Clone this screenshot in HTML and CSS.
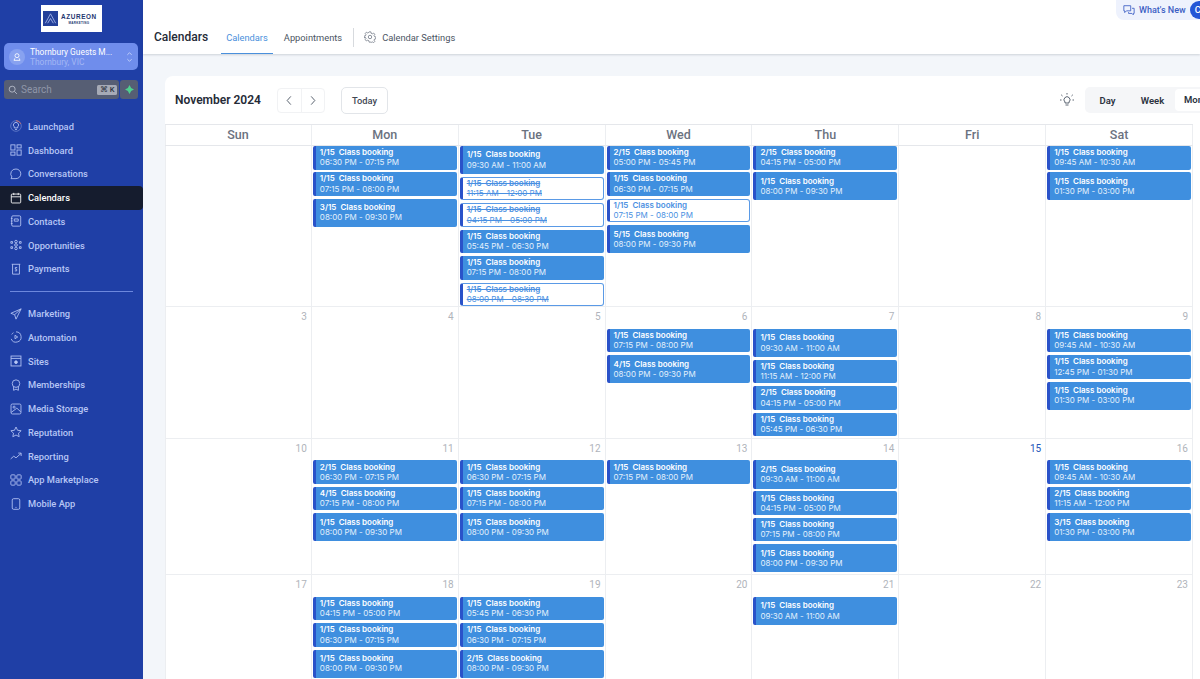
FILE: index.html
```html
<!DOCTYPE html>
<html lang="en">
<head>
<meta charset="utf-8">
<title>Calendars</title>
<link rel="stylesheet" href="styles.css">
</head>
<body>
<svg class="sprite" width="0" height="0" aria-hidden="true">
  <defs>
    <symbol id="i-launch" viewBox="0 0 14 14"><circle cx="7" cy="7" r="6.200" stroke-opacity=".45"/><path d="M7 .8a6.200 6.200 0 0 1 5.600 3.600" stroke="#e0705f"/><path d="M5 9.200V8a3 3 0 1 1 4 0v1.200zM5.800 11h2.400"/></symbol>
    <symbol id="i-dash" viewBox="0 0 14 14"><rect x="1" y="1" width="4.800" height="6"/><rect x="8.200" y="1" width="4.800" height="3.600"/><rect x="1" y="9.400" width="4.800" height="3.600"/><rect x="8.200" y="7" width="4.800" height="6"/></symbol>
    <symbol id="i-conv" viewBox="0 0 14 14"><path d="M7 1.200a5.600 5.600 0 0 1 0 11.200H1.200l1-2A5.600 5.600 0 0 1 7 1.200z"/></symbol>
    <symbol id="i-cal" viewBox="0 0 14 14"><rect x="1.500" y="2.400" width="11" height="10.400" rx="1"/><path d="M1.500 5.600h11M4.400 1v2.600M9.600 1v2.600"/></symbol>
    <symbol id="i-contacts" viewBox="0 0 14 14"><rect x="2" y="1" width="10.500" height="12" rx="1.400"/><path d="M5 4.600h4.600v2.600H5zM1 4h2M1 7h2M1 10h2"/></symbol>
    <symbol id="i-opp" viewBox="0 0 14 14"><circle cx="7" cy="3" r="1.500"/><circle cx="7" cy="11" r="1.500"/><path d="M5.400 7a1.600 1.600 0 1 0 3.200 0 1.600 1.600 0 1 0-3.200 0M1 3h2v2H1zM1 9h2v2H1zM11 3h2v2h-2zM11 9h2v2h-2z"/></symbol>
    <symbol id="i-pay" viewBox="0 0 14 14"><path d="M2 1.500h10M3 1.500V13h8V1.500"/><path d="M8.400 5.200H6.200v2h1.600v2H5.600"/></symbol>
    <symbol id="i-mkt" viewBox="0 0 14 14"><path d="M13 1 1 6.200l4.400 1.600L7 13z"/><path d="M13 1 5.400 7.800"/></symbol>
    <symbol id="i-auto" viewBox="0 0 14 14"><path d="M7 1a6 6 0 1 1-5.600 8.200"/><path d="M2 4a6 6 0 0 1 2-2"/><path d="M5.800 5v4l3.200-2z"/></symbol>
    <symbol id="i-sites" viewBox="0 0 14 14"><rect x="1.200" y="1.200" width="11.600" height="11.600"/><path d="M1.200 4h11.600"/><circle cx="7" cy="8.400" r="1.600" fill="currentColor"/></symbol>
    <symbol id="i-mem" viewBox="0 0 14 14"><circle cx="7" cy="5.400" r="4.400"/><path d="M4.200 9v4.200L7 11.800l2.800 1.400V9"/></symbol>
    <symbol id="i-media" viewBox="0 0 14 14"><rect x="1.200" y="1.200" width="11.600" height="11.600" rx="1.600"/><circle cx="4.800" cy="4.800" r="1.200"/><path d="M1.400 11 8 6l4.600 4.400"/></symbol>
    <symbol id="i-rep" viewBox="0 0 14 14"><path d="m7 1.200 1.800 3.800 4.200.5-3.100 2.900.8 4.100L7 10.500l-3.700 2 .8-4.100L1 5.500l4.200-.5z"/></symbol>
    <symbol id="i-report" viewBox="0 0 14 14"><path d="m.8 10.400 3.600-3.200 2.600 2L12.800 4M9.600 3.600h3.400V7"/></symbol>
    <symbol id="i-app" viewBox="0 0 14 14"><rect x="1" y="1" width="5" height="5" rx="1"/><rect x="8" y="1" width="5" height="5" rx="1"/><rect x="1" y="8" width="5" height="5" rx="1"/><rect x="8" y="8" width="5" height="5" rx="1"/></symbol>
    <symbol id="i-mobile" viewBox="0 0 14 14"><rect x="2.600" y=".8" width="8.800" height="12.400" rx="1.600"/><path d="M6.400 11h1.200"/></symbol>
  </defs>
</svg>

<aside class="sidebar">
  <div class="logo">
    <svg class="logo-mark" viewBox="0 0 16 16"><rect width="16" height="16" fill="#24409a"/><path d="M2.500 13 8 3l5.500 10M5 13l3-5 3 5" fill="none" stroke="#b9c8f5" stroke-width=".8"/></svg>
    <div class="logo-text"><span class="logo-name">AZUREON</span><span class="logo-sub">MARKETING</span></div>
  </div>
  <div class="location">
    <span class="loc-badge"><svg viewBox="0 0 12 12"><circle cx="6" cy="4.400" r="2.400"/><path d="M3.400 7.600 2.400 10h7.200l-1-2.400"/></svg></span>
    <div class="loc-text"><span class="loc-name">Thornbury Guests M...</span><span class="loc-sub">Thornbury, VIC</span></div>
    <svg class="loc-chev" viewBox="0 0 8 14"><path d="M1.500 4.500 4 2l2.500 2.500M1.500 9.500 4 12l2.500-2.500"/></svg>
  </div>
  <div class="search-row">
    <div class="search">
      <svg viewBox="0 0 12 12"><circle cx="5" cy="5" r="3.600"/><path d="m7.700 7.700 3 3"/></svg>
      <span class="search-label">Search</span>
      <span class="kbd">⌘ K</span>
    </div>
    <button class="spark"><svg viewBox="0 0 10 10"><path d="M5 0 6.800 3.200 10 5 6.800 6.800 5 10 3.200 6.800 0 5 3.200 3.200z"/></svg></button>
  </div>
  <nav class="nav">
    <a class="nav-item"><svg><use href="#i-launch"/></svg>Launchpad</a>
    <a class="nav-item"><svg><use href="#i-dash"/></svg>Dashboard</a>
    <a class="nav-item"><svg><use href="#i-conv"/></svg>Conversations</a>
    <a class="nav-item active"><svg><use href="#i-cal"/></svg>Calendars</a>
    <a class="nav-item"><svg><use href="#i-contacts"/></svg>Contacts</a>
    <a class="nav-item"><svg><use href="#i-opp"/></svg>Opportunities</a>
    <a class="nav-item"><svg><use href="#i-pay"/></svg>Payments</a>
  </nav>
  <hr class="nav-rule">
  <nav class="nav">
    <a class="nav-item"><svg><use href="#i-mkt"/></svg>Marketing</a>
    <a class="nav-item"><svg><use href="#i-auto"/></svg>Automation</a>
    <a class="nav-item"><svg><use href="#i-sites"/></svg>Sites</a>
    <a class="nav-item"><svg><use href="#i-mem"/></svg>Memberships</a>
    <a class="nav-item"><svg><use href="#i-media"/></svg>Media Storage</a>
    <a class="nav-item"><svg><use href="#i-rep"/></svg>Reputation</a>
    <a class="nav-item"><svg><use href="#i-report"/></svg>Reporting</a>
    <a class="nav-item"><svg><use href="#i-app"/></svg>App Marketplace</a>
    <a class="nav-item"><svg><use href="#i-mobile"/></svg>Mobile App</a>
  </nav>
</aside>

<main class="main">
  <header class="topbar">
    <h1 class="page-title">Calendars</h1>
    <a class="tab current">Calendars</a>
    <a class="tab">Appointments</a>
    <span class="tab-sep"></span>
    <a class="tab settings">
      <svg viewBox="0 0 14 14"><circle cx="7" cy="7" r="2"/><path d="M6 1h2l.4 1.700 1.300.6 1.500-.9 1.400 1.400-.9 1.500.6 1.300 1.700.4v2l-1.700.4-.6 1.300.9 1.500-1.400 1.400-1.500-.9-1.300.6L8 13H6l-.4-1.700-1.300-.6-1.500.9-1.400-1.400.9-1.500-.6-1.300L0 8V6l1.700-.4.600-1.300-.9-1.500 1.400-1.400 1.500.9 1.300-.6z"/></svg>
      Calendar Settings
    </a>
    <div class="whats-new">
      <svg viewBox="0 0 14 14"><path d="M1 2h8v6H4l-2 2V8H1zM10.500 5H13v6h-1v1.600L10.400 11H6.500V9.500"/></svg>
      What's New
      <span class="wn-dot">C</span>
    </div>
  </header>

  <section class="card">
    <div class="toolbar">
      <h2 class="month">November 2024</h2>
      <div class="pager">
        <button class="pager-btn"><svg viewBox="0 0 8 12"><path d="M6 1.500 2 6l4 4.500"/></svg></button>
        <button class="pager-btn"><svg viewBox="0 0 8 12"><path d="M2 1.500 6 6l-4 4.500"/></svg></button>
      </div>
      <button class="today">Today</button>
      <svg class="bulb" viewBox="0 0 14 14"><path d="M5 10V9a3 3 0 1 1 4 0v1zM5.500 12h3M7 1.500V0M2.500 3 1.200 1.800M11.500 3l1.300-1.200M1.500 7H0M14 7h-1.500"/></svg>
      <div class="views">
        <span class="view">Day</span>
        <span class="view">Week</span>
        <span class="view on">Month</span>
      </div>
    </div>

    <div class="week head">
      <div class="dow">Sun</div><div class="dow">Mon</div><div class="dow">Tue</div><div class="dow">Wed</div><div class="dow">Thu</div><div class="dow">Fri</div><div class="dow">Sat</div>
    </div>

    <div class="week w1">
      <div class="day"></div>
      <div class="day">
        <div class="ev"><b>1/15&nbsp; Class booking</b><span>06:30 PM - 07:15 PM</span></div>
        <div class="ev"><b>1/15&nbsp; Class booking</b><span>07:15 PM - 08:00 PM</span></div>
        <div class="ev tall"><b>3/15&nbsp; Class booking</b><span>08:00 PM - 09:30 PM</span></div>
      </div>
      <div class="day">
        <div class="ev tall"><b>1/15&nbsp; Class booking</b><span>09:30 AM - 11:00 AM</span></div>
        <div class="ev off"><b>1/15&nbsp; Class booking</b><span>11:15 AM - 12:00 PM</span></div>
        <div class="ev off"><b>1/15&nbsp; Class booking</b><span>04:15 PM - 05:00 PM</span></div>
        <div class="ev"><b>1/15&nbsp; Class booking</b><span>05:45 PM - 06:30 PM</span></div>
        <div class="ev"><b>1/15&nbsp; Class booking</b><span>07:15 PM - 08:00 PM</span></div>
        <div class="ev off"><b>1/15&nbsp; Class booking</b><span>08:00 PM - 08:30 PM</span></div>
      </div>
      <div class="day">
        <div class="ev"><b>2/15&nbsp; Class booking</b><span>05:00 PM - 05:45 PM</span></div>
        <div class="ev"><b>1/15&nbsp; Class booking</b><span>06:30 PM - 07:15 PM</span></div>
        <div class="ev open"><b>1/15&nbsp; Class booking</b><span>07:15 PM - 08:00 PM</span></div>
        <div class="ev tall"><b>5/15&nbsp; Class booking</b><span>08:00 PM - 09:30 PM</span></div>
      </div>
      <div class="day">
        <div class="ev"><b>2/15&nbsp; Class booking</b><span>04:15 PM - 05:00 PM</span></div>
        <div class="ev tall"><b>1/15&nbsp; Class booking</b><span>08:00 PM - 09:30 PM</span></div>
      </div>
      <div class="day"></div>
      <div class="day">
        <div class="ev"><b>1/15&nbsp; Class booking</b><span>09:45 AM - 10:30 AM</span></div>
        <div class="ev tall"><b>1/15&nbsp; Class booking</b><span>01:30 PM - 03:00 PM</span></div>
      </div>
    </div>

    <div class="week w2">
      <div class="day"><div class="date">3</div></div>
      <div class="day"><div class="date">4</div></div>
      <div class="day"><div class="date">5</div></div>
      <div class="day"><div class="date">6</div>
        <div class="ev"><b>1/15&nbsp; Class booking</b><span>07:15 PM - 08:00 PM</span></div>
        <div class="ev tall"><b>4/15&nbsp; Class booking</b><span>08:00 PM - 09:30 PM</span></div>
      </div>
      <div class="day"><div class="date">7</div>
        <div class="ev tall"><b>1/15&nbsp; Class booking</b><span>09:30 AM - 11:00 AM</span></div>
        <div class="ev"><b>1/15&nbsp; Class booking</b><span>11:15 AM - 12:00 PM</span></div>
        <div class="ev"><b>2/15&nbsp; Class booking</b><span>04:15 PM - 05:00 PM</span></div>
        <div class="ev"><b>1/15&nbsp; Class booking</b><span>05:45 PM - 06:30 PM</span></div>
      </div>
      <div class="day"><div class="date">8</div></div>
      <div class="day"><div class="date">9</div>
        <div class="ev"><b>1/15&nbsp; Class booking</b><span>09:45 AM - 10:30 AM</span></div>
        <div class="ev"><b>1/15&nbsp; Class booking</b><span>12:45 PM - 01:30 PM</span></div>
        <div class="ev tall"><b>1/15&nbsp; Class booking</b><span>01:30 PM - 03:00 PM</span></div>
      </div>
    </div>

    <div class="week w3">
      <div class="day"><div class="date">10</div></div>
      <div class="day"><div class="date">11</div>
        <div class="ev"><b>2/15&nbsp; Class booking</b><span>06:30 PM - 07:15 PM</span></div>
        <div class="ev"><b>4/15&nbsp; Class booking</b><span>07:15 PM - 08:00 PM</span></div>
        <div class="ev tall"><b>1/15&nbsp; Class booking</b><span>08:00 PM - 09:30 PM</span></div>
      </div>
      <div class="day"><div class="date">12</div>
        <div class="ev"><b>1/15&nbsp; Class booking</b><span>06:30 PM - 07:15 PM</span></div>
        <div class="ev"><b>1/15&nbsp; Class booking</b><span>07:15 PM - 08:00 PM</span></div>
        <div class="ev tall"><b>1/15&nbsp; Class booking</b><span>08:00 PM - 09:30 PM</span></div>
      </div>
      <div class="day"><div class="date">13</div>
        <div class="ev"><b>1/15&nbsp; Class booking</b><span>07:15 PM - 08:00 PM</span></div>
      </div>
      <div class="day"><div class="date">14</div>
        <div class="ev tall"><b>2/15&nbsp; Class booking</b><span>09:30 AM - 11:00 AM</span></div>
        <div class="ev"><b>1/15&nbsp; Class booking</b><span>04:15 PM - 05:00 PM</span></div>
        <div class="ev"><b>1/15&nbsp; Class booking</b><span>07:15 PM - 08:00 PM</span></div>
        <div class="ev tall"><b>1/15&nbsp; Class booking</b><span>08:00 PM - 09:30 PM</span></div>
      </div>
      <div class="day"><div class="date today-date">15</div></div>
      <div class="day"><div class="date">16</div>
        <div class="ev"><b>1/15&nbsp; Class booking</b><span>09:45 AM - 10:30 AM</span></div>
        <div class="ev"><b>2/15&nbsp; Class booking</b><span>11:15 AM - 12:00 PM</span></div>
        <div class="ev tall"><b>3/15&nbsp; Class booking</b><span>01:30 PM - 03:00 PM</span></div>
      </div>
    </div>

    <div class="week w4">
      <div class="day"><div class="date">17</div></div>
      <div class="day"><div class="date">18</div>
        <div class="ev"><b>1/15&nbsp; Class booking</b><span>04:15 PM - 05:00 PM</span></div>
        <div class="ev"><b>1/15&nbsp; Class booking</b><span>06:30 PM - 07:15 PM</span></div>
        <div class="ev tall"><b>1/15&nbsp; Class booking</b><span>08:00 PM - 09:30 PM</span></div>
      </div>
      <div class="day"><div class="date">19</div>
        <div class="ev"><b>1/15&nbsp; Class booking</b><span>05:45 PM - 06:30 PM</span></div>
        <div class="ev"><b>1/15&nbsp; Class booking</b><span>06:30 PM - 07:15 PM</span></div>
        <div class="ev tall"><b>2/15&nbsp; Class booking</b><span>08:00 PM - 09:30 PM</span></div>
      </div>
      <div class="day"><div class="date">20</div></div>
      <div class="day"><div class="date">21</div>
        <div class="ev tall"><b>1/15&nbsp; Class booking</b><span>09:30 AM - 11:00 AM</span></div>
      </div>
      <div class="day"><div class="date">22</div></div>
      <div class="day"><div class="date">23</div></div>
    </div>
  </section>
</main>
</body>
</html>
```

FILE: styles.css
```css
* { box-sizing: border-box; }
html, body { height: 100%; }
body {
  margin: 0;
  display: flex;
  width: 1200px;
  height: 679px;
  overflow: hidden;
  font-family: Roboto, "Liberation Sans", sans-serif;
  background: #f3f6fa;
  color: #1f2937;
}
.sprite { position: absolute; }

/* Sidebar */
.sidebar {
  flex: 0 0 143px;
  background: #1f3fa6;
  display: flex;
  flex-direction: column;
  padding-top: 5px;
}
.logo {
  width: 61px;
  height: 27px;
  margin-left: 41px;
  background: #fff;
  display: flex;
  align-items: center;
  gap: 3px;
  padding: 0 2px;
}
.logo-mark { width: 15px; height: 15px; flex: none; }
.logo-text { display: flex; flex-direction: column; align-items: center; color: #24366f; }
.logo-name { font: 700 6.400px/8px "Liberation Sans", sans-serif; letter-spacing: .6px; }
.logo-sub { font: 700 3px/4px "Liberation Sans", sans-serif; letter-spacing: .3px; }

.location {
  margin: 11px 5px 0 4px;
  height: 27px;
  border-radius: 5px;
  background: #6f8dec;
  display: flex;
  align-items: center;
  padding: 0 5px;
  color: #fff;
}
.loc-badge {
  width: 16px; height: 16px; border-radius: 50%;
  background: #88a2f0;
  display: flex; align-items: center; justify-content: center;
  flex: none;
}
.loc-badge svg { width: 10px; height: 10px; fill: none; stroke: #fff; stroke-width: 1; }
.loc-text { display: flex; flex-direction: column; margin-left: 5px; flex: 1; min-width: 0; }
.loc-name { font-size: 8.400px; line-height: 10px; font-weight: 400; white-space: nowrap; }
.loc-sub { font-size: 8.400px; line-height: 10px; color: #a3b7f4; }
.loc-chev { width: 7px; height: 12px; fill: none; stroke: #c9d6fa; stroke-width: 1; flex: none; }

.search-row { display: flex; margin: 10px 5px 0 4px; gap: 1px; height: 19px; }
.search {
  flex: 1;
  background: #565e74;
  border-radius: 3px;
  display: flex; align-items: center;
  padding: 0 2px 0 4px;
  color: #8f96a8;
  font-size: 10px;
}
.search svg { width: 10px; height: 10px; fill: none; stroke: #b5bac8; stroke-width: 1.100; flex: none; }
.search-label { margin-left: 3px; flex: 1; }
.kbd { background: #a6aab6; color: #2f3542; border-radius: 1.500px; font-size: 7.500px; line-height: 10px; padding: 0 2.500px; font-weight: 500; }
.spark { flex: 0 0 18px; border: 0; padding: 0; background: #565e74; border-radius: 3px; display: flex; align-items: center; justify-content: center; }
.spark svg { width: 9px; height: 9px; fill: #4fd08f; }

.nav { display: flex; flex-direction: column; }
.sidebar .nav:first-of-type { margin-top: 15.500px; }
.nav-item {
  height: 23.750px;
  display: flex;
  align-items: center;
  padding-left: 10px;
  gap: 6px;
  font-size: 9.300px;
  font-weight: 500;
  color: #b7c6f5;
}
.nav-item svg { width: 12px; height: 12px; flex: none; fill: none; stroke: currentColor; stroke-width: 1; }
.nav-item.active { background: #151c2e; color: #fff; border-radius: 0 4px 4px 0; }
.nav-rule { border: 0; border-top: 1px solid #6d88dd; margin: 10px 10px 10px 10px; width: 123px; }

/* Main */
.main { flex: 1; min-width: 0; display: flex; flex-direction: column; position: relative; }
.topbar {
  height: 54px;
  background: #fff;
  box-shadow: 0 1px 2px rgba(40, 50, 70, .18);
  display: flex;
  align-items: center;
  padding: 20px 0 0 11px;
  flex: none;
}
.page-title { margin: 0 13px 0 0; font-size: 12px; font-weight: 500; color: #252b37; }
.tab { font-size: 9.300px; color: #4b5563; padding: 0 5px; height: 34px; display: flex; align-items: center; margin-right: 6px; }
.tab.current { color: #4a90dc; border-bottom: 1px solid #4a90dc; padding-top: 1px; }
.tab-sep { width: 1px; height: 19px; background: #d7dade; margin: 0 5px 0 0; }
.tab.settings { gap: 6px; }
.tab.settings svg { width: 12px; height: 12px; fill: none; stroke: #5b6472; stroke-width: .8; }
.whats-new {
  position: absolute;
  top: 0;
  left: 973px;
  width: 100px;
  height: 20px;
  border-radius: 0 0 0 8px;
  background: #eef2fd;
  display: flex;
  align-items: center;
  padding-left: 7px;
  gap: 4px;
  font-size: 9px;
  font-weight: 500;
  color: #3d5fc4;
  white-space: nowrap;
}
.whats-new svg { width: 12px; height: 12px; fill: none; stroke: #3d5fc4; stroke-width: 1; flex: none; }
.wn-dot { flex: none; width: 18px; height: 18px; border-radius: 50%; background: #2456d6; color: #fff; display: flex; align-items: center; padding-left: 5px; }

/* Calendar card */
.card {
  margin: 22px 0 0 22px;
  width: 1060px;
  background: #fff;
  border-radius: 8px 0 0 0;
  flex: none;
}
.toolbar { height: 48px; display: flex; align-items: center; padding-left: 10px; width: 1028px; }
.month { margin: 0; font-size: 12px; font-weight: 600; color: #252b37; width: 102px; flex: none; }
.pager { display: flex; height: 25px; width: 48px; border: 1px solid #f1f2f4; border-radius: 4px; flex: none; }
.pager-btn { flex: 1; border: 0; background: none; padding: 0; display: flex; align-items: center; justify-content: center; }
.pager-btn + .pager-btn { border-left: 1px solid #f1f2f4; }
.pager-btn svg { width: 8px; height: 11px; fill: none; stroke: #4b5563; stroke-width: 1; }
.today {
  margin-left: 16px;
  width: 47px; height: 27px;
  background: #fff;
  border: 1px solid #e2e5e9;
  border-radius: 5px;
  font: 500 9.300px Roboto, sans-serif;
  color: #3f4754;
  flex: none;
}
.bulb { width: 14px; height: 14px; margin-left: auto; margin-right: 11px; fill: none; stroke: #4b5563; stroke-width: .9; flex: none; }
.views {
  display: flex; align-items: center;
  height: 26px;
  background: #f5f6f8;
  border-radius: 5px;
  margin-right: -32px;
  width: 140px;
  flex: none;
  font-size: 9.500px;
  font-weight: 600;
  color: #2b3240;
  overflow: hidden;
}
.view { width: 45px; text-align: center; flex: none; }
.view.on { background: #fff; height: 22px; line-height: 22px; border-radius: 4px; padding-left: 9px; text-align: left; width: 50px; }

.week { display: grid; grid-template-columns: repeat(7, minmax(0, 1fr)); width: 1028px; box-shadow: inset 1px 0 #eceef1; }
.head { height: 22px; border-top: 1px solid #e5e7eb; }
.dow {
  font-size: 12.500px; font-weight: 500; color: #6b7280;
  text-align: center; line-height: 20px;
  border-right: 1px solid #eceef1;
  border-bottom: 1px solid #e5e7eb;
}
.w1 { height: 161px; }
.w2 { height: 131.500px; }
.w3 { height: 136.500px; }
.w4 { height: 120px; }
.day {
  border-right: 1px solid #eceef1;
  border-bottom: 1px solid #eceef1;
  padding: 0 1px;
  min-width: 0;
  display: flex;
  flex-direction: column;
  gap: 2.900px;
}
.date { height: 19.100px; flex: none; padding: 4px 3px 0 0; text-align: right; font-size: 10px; line-height: 11px; color: #b0b4bb; }
.today-date { color: #2456b8; }

.ev {
  flex: none;
  height: 23.500px;
  background: #3f8fdf;
  border-left: 3px solid #2a52c9;
  border-radius: 2px;
  color: #fff;
  padding: 0 0 1px 4px;
  display: flex;
  flex-direction: column;
  justify-content: center;
  font-family: Inter, Roboto, sans-serif;
  font-size: 8px;
  line-height: 10.200px;
  white-space: nowrap;
  overflow: hidden;
}
.ev.tall { height: 28.100px; }
.ev b { font-weight: 600; }
.ev span { font-weight: 400; color: #e3effc; }
.ev.off, .ev.open {
  background: #fff;
  color: #4a90e2;
  border: 1px solid #5a9ae6;
  border-left: 3px solid #2a52c9;
  border-radius: 3px;
}
.ev.off span, .ev.open span { color: #4a90e2; }
.ev.off b, .ev.off span { text-decoration: line-through; }
```
